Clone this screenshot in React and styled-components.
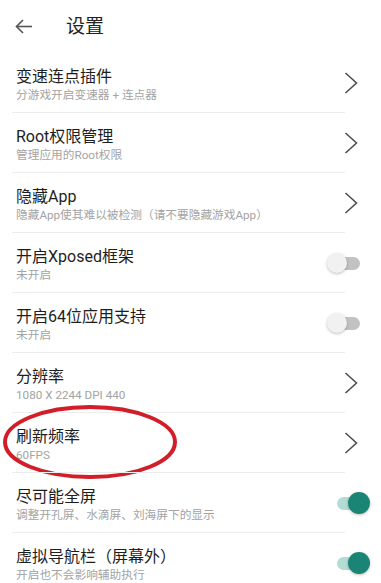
import React from "react";
import styled, { createGlobalStyle } from "styled-components";

const Global = createGlobalStyle`
  html, body { margin: 0; padding: 0; background: #fff; }
  body { font-family: Roboto, "Noto Sans CJK SC", "Noto Sans", sans-serif; }
`;

const Page = styled.div`
  width: 381px;
  height: 583px;
  overflow: hidden;
  background: #fff;
`;

const Header = styled.div`
  height: 53px;
  display: flex;
  align-items: center;
  padding-left: 15px;
  gap: 33px;
  box-sizing: border-box;
`;

const Title = styled.div`
  font-size: 19px;
  color: #222;
  line-height: 24px;
`;

const Row = styled.div`
  position: relative;
  height: 60px;
  display: flex;
  align-items: flex-start;
  box-sizing: border-box;
  padding: 13px 0 0 16px;
  &::after {
    content: "";
    position: absolute;
    left: 12px;
    right: 36px;
    bottom: 0;
    height: 1px;
    background: ${p => (p.last ? "transparent" : "#ececec")};
  }
`;

const Texts = styled.div`
  flex: 1;
  display: flex;
  flex-direction: column;
`;

const ItemTitle = styled.div`
  font-size: 16px;
  line-height: 21px;
  color: #1e1e1e;
`;

const ItemSub = styled.div`
  font-size: 11.7px;
  line-height: 14px;
  color: #a3a3a3;
  margin-top: 1px;
`;

const Accessory = styled.div`
  align-self: center;
  margin-top: -13px;
  margin-right: ${p => p.right}px;
  display: flex;
  align-items: center;
`;

const Track = styled.div`
  position: relative;
  width: 31px;
  height: 13px;
  border-radius: 7px;
  background: ${p => (p.on ? "#b4dcd5" : "#c2c2c2")};
  margin-left: ${p => (p.on ? 0 : 2)}px;
`;

const Thumb = styled.div`
  position: absolute;
  top: 50%;
  width: ${p => (p.on ? 22 : 20)}px;
  height: ${p => (p.on ? 22 : 20)}px;
  border-radius: 50%;
  transform: translateY(-50%);
  background: ${p => (p.on ? "#1a8574" : "#f1f1f1")};
  box-shadow: 0 1px 3px rgba(0, 0, 0, 0.25);
  ${p => (p.on ? "right: -2px;" : "left: -2px;")}
`;

const Circle = styled.svg`
  position: absolute;
  left: 2px;
  top: -9px;
  pointer-events: none;
`;

const Chevron = () => (
  <svg width="14" height="22" viewBox="0 0 14 22">
    <polyline points="1.5,1 12.5,11 1.5,21" fill="none" stroke="#4a4a4a" strokeWidth="1.5" />
  </svg>
);

const BackArrow = () => (
  <svg width="18" height="15" viewBox="0 0 18 15">
    <line x1="1.5" y1="7.5" x2="17" y2="7.5" stroke="#555" strokeWidth="1.6" />
    <polyline points="8,1 1.5,7.5 8,14" fill="none" stroke="#555" strokeWidth="1.6" />
  </svg>
);

const Switch = ({ on }) => (
  <Accessory right={on ? 13 : 21}>
    <Track on={on}>
      <Thumb on={on} />
    </Track>
  </Accessory>
);

const items = [
  { title: "变速连点插件", sub: "分游戏开启变速器 + 连点器", type: "link" },
  { title: "Root权限管理", sub: "管理应用的Root权限", type: "link" },
  { title: "隐藏App", sub: "隐藏App使其难以被检测（请不要隐藏游戏App）", type: "link" },
  { title: "开启Xposed框架", sub: "未开启", type: "off" },
  { title: "开启64位应用支持", sub: "未开启", type: "off" },
  { title: "分辨率", sub: "1080 X 2244 DPI 440", type: "link" },
  { title: "刷新频率", sub: "60FPS", type: "link", mark: true },
  { title: "尽可能全屏", sub: "调整开孔屏、水滴屏、刘海屏下的显示", type: "on" },
  { title: "虚拟导航栏（屏幕外）", sub: "开启也不会影响辅助执行", type: "on" },
];

export default function App() {
  return (
    <Page>
      <Global />
      <Header>
        <BackArrow />
        <Title>设置</Title>
      </Header>
      {items.map((it, i) => (
        <Row key={it.title} last={i === items.length - 1}>
          <Texts>
            <ItemTitle>{it.title}</ItemTitle>
            <ItemSub>{it.sub}</ItemSub>
          </Texts>
          {it.type === "link" ? (
            <Accessory right={23}>
              <Chevron />
            </Accessory>
          ) : (
            <Switch on={it.type === "on"} />
          )}
          {it.mark && (
            <Circle width="176" height="76" viewBox="0 0 176 76">
              <ellipse cx="88" cy="38" rx="85" ry="35" fill="none" stroke="#d21e29" strokeWidth="4" />
            </Circle>
          )}
        </Row>
      ))}
    </Page>
  );
}
